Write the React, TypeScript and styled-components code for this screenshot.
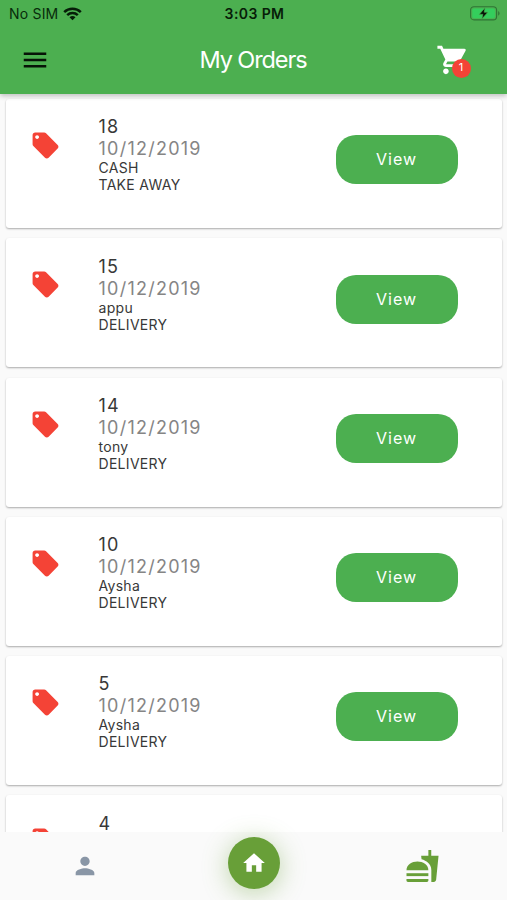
import React from "react";
import styled, { createGlobalStyle } from "styled-components";
import { MdMenu, MdShoppingCart, MdLocalOffer, MdPerson, MdHome } from "react-icons/md";

const GlobalStyle = createGlobalStyle`
  * { box-sizing: border-box; }
  body { margin: 0; background: #fafafa; font-family: Inter, "Liberation Sans", sans-serif; }
  svg { display: block; }
`;

const Screen = styled.div`
  width: 507px;
  height: 900px;
  display: flex;
  flex-direction: column;
  overflow: hidden;
  background: #fafafa;
`;

const Header = styled.header`
  height: 94px;
  flex: none;
  background: #4caf50;
  box-shadow: 0 2px 5px rgba(0, 0, 0, 0.24);
  z-index: 1;
`;

const StatusBar = styled.div`
  height: 28px;
  display: grid;
  grid-template-columns: 1fr auto 1fr;
  align-items: center;
  padding: 0 7px 0 9px;
  color: #082b0b;
  font-size: 14px;
  line-height: 28px;
`;

const Carrier = styled.div`
  display: flex;
  align-items: center;
  gap: 5px;
  letter-spacing: 0.2px;
`;

const Clock = styled.div`
  font-weight: 600;
  letter-spacing: 0.4px;
  color: #071d08;
`;

const BatterySlot = styled.div`
  justify-self: end;
  margin-top: -1px;
`;

const AppBar = styled.div`
  height: 66px;
  display: grid;
  grid-template-columns: 1fr auto 1fr;
  align-items: center;
  padding: 0 37px 2px 20px;
`;

const MenuButton = styled.button`
  border: 0;
  padding: 0;
  background: none;
  width: 30px;
  color: #061307;
`;

const Title = styled.h1`
  margin: 0 0 0 16px;
  color: #fff;
  font-size: 23.5px;
  font-weight: 400;
  line-height: 30px;
  letter-spacing: -1.1px;
`;

const Cart = styled.div`
  position: relative;
  justify-self: end;
  margin-top: -1px;
  color: #fff;
`;

const Badge = styled.span`
  position: absolute;
  left: 15.5px;
  top: 16px;
  width: 19px;
  height: 19px;
  border-radius: 50%;
  background: #f44336;
  font-size: 11px;
  line-height: 16px;
  text-align: center;
`;

const Orders = styled.main`
  flex: 1;
  min-height: 0;
  overflow: hidden;
  display: flex;
  flex-direction: column;
  gap: 10.3px;
  padding: 5px 5px 0 6px;
`;

const Card = styled.article`
  flex: none;
  height: 129px;
  display: grid;
  grid-template-columns: 92.5px 1fr 122px;
  align-items: start;
  padding: 0 44px 0 0;
  border-radius: 3px;
  background: #fff;
  box-shadow: 0 1px 2px rgba(0, 0, 0, 0.32);
`;

const TagIcon = styled(MdLocalOffer)`
  margin: 31px 0 0 24px;
  color: #f44336;
`;

const Details = styled.div`
  padding-top: 17.3px;
  color: #383838;
`;

const OrderNumber = styled.div`
  font-size: 18px;
  line-height: 22px;
  letter-spacing: 1.1px;
`;

const OrderDate = styled.div`
  color: #858585;
  font-size: 18px;
  line-height: 22px;
  letter-spacing: 1.25px;
`;

const Line = styled.div`
  font-size: 14px;
  line-height: 17px;
  letter-spacing: 0.3px;
`;

const Lines = styled.div`
  margin-top: -1px;
`;

const ViewButton = styled.button`
  margin-top: 36.3px;
  height: 49px;
  padding: 0 1px 0 0;
  border: 0;
  border-radius: 20px;
  background: #4caf50;
  color: #fff;
  font: 400 16px/49px Inter, sans-serif;
  letter-spacing: 1px;
`;

const BottomBar = styled.nav`
  height: 68px;
  flex: none;
  display: grid;
  grid-template-columns: repeat(3, 1fr);
  justify-items: center;
  align-items: center;
  background: #fafafa;
  z-index: 1;
`;

const NavItem = styled.div<{ $color: string }>`
  color: ${(p) => p.$color};
`;

const HomeButton = styled.div`
  width: 52px;
  height: 52px;
  margin-bottom: 6px;
  display: grid;
  place-items: center;
  border-radius: 50%;
  background: #689f38;
  color: #fff;
  box-shadow: 0 4px 26px rgba(104, 159, 56, 0.42);
`;

const Wifi = () => (
  <svg width="19" height="14" viewBox="0 0 19 14" fill="none" stroke="#061d08" strokeWidth="2.5">
    <path d="M1.2 5.1C5.8.6 13.2.6 17.8 5.1" />
    <path d="M4.2 8.2c3-2.8 7.6-2.8 10.6 0" />
    <path d="M9.5 13.3l-3-3.1c1.7-1.5 4.3-1.5 6 0z" fill="#061d08" stroke="none" />
  </svg>
);

const Battery = () => (
  <svg width="30" height="15" viewBox="0 0 30 15">
    <rect x=".6" y=".7" width="26" height="13.2" rx="3.4" fill="none" stroke="#2f7435" strokeWidth="1.1" />
    <rect x="2.3" y="2.4" width="22.6" height="9.8" rx="1.8" fill="#34ce5c" />
    <path d="M28.2 5v4.8c1.8-.8 1.8-4 0-4.8" fill="#2f7435" />
    <path d="M15.2 1.6L9.2 8.4h3.6l-1 4.7 6.1-6.9h-3.7z" fill="#061307" stroke="#4caf50" strokeWidth=".7" />
  </svg>
);

const Fastfood = () => (
  <svg width="35" height="35" viewBox="0 0.4 24 24" fill="currentColor">
    <path d="M18.06 22.99h1.66c.84 0 1.53-.64 1.63-1.46L23 5.05h-5V1h-1.97v4.05h-4.97l.3 2.34c1.71.47 3.31 1.32 4.27 2.26 1.44 1.42 2.43 2.89 2.43 5.29v8.05z" />
    <path d="M1 21.99V21h15.03v.99c0 .55-.45 1-1.01 1H2.01c-.56 0-1.01-.45-1.01-1z" />
    <path d="M16.03 14.99c0-8-15.03-8-15.03 0h15.03z" />
    <path d="M1.02 17h15v2h-15z" />
  </svg>
);

const orders = [
  { number: 18, customer: "CASH", method: "TAKE AWAY" },
  { number: 15, customer: "appu", method: "DELIVERY" },
  { number: 14, customer: "tony", method: "DELIVERY" },
  { number: 10, customer: "Aysha", method: "DELIVERY" },
  { number: 5, customer: "Aysha", method: "DELIVERY" },
  { number: 4, customer: "", method: "" },
];

export default function App() {
  return (
    <Screen>
      <GlobalStyle />
      <Header>
        <StatusBar>
          <Carrier>No SIM <Wifi /></Carrier>
          <Clock>3:03 PM</Clock>
          <BatterySlot><Battery /></BatterySlot>
        </StatusBar>
        <AppBar>
          <MenuButton aria-label="Menu"><MdMenu size={30} /></MenuButton>
          <Title>My Orders</Title>
          <Cart>
            <MdShoppingCart size={34} />
            <Badge>1</Badge>
          </Cart>
        </AppBar>
      </Header>
      <Orders>
        {orders.map((o) => (
          <Card key={o.number}>
            <TagIcon size={31} />
            <Details>
              <OrderNumber>{o.number}</OrderNumber>
              {o.method && (
                <>
                  <OrderDate>10/12/2019</OrderDate>
                  <Lines>
                    <Line>{o.customer}</Line>
                    <Line>{o.method}</Line>
                  </Lines>
                </>
              )}
            </Details>
            {o.method && <ViewButton>View</ViewButton>}
          </Card>
        ))}
      </Orders>
      <BottomBar>
        <NavItem $color="#8996a6"><MdPerson size={28} /></NavItem>
        <HomeButton><MdHome size={26} /></HomeButton>
        <NavItem $color="#689f38"><Fastfood /></NavItem>
      </BottomBar>
    </Screen>
  );
}
